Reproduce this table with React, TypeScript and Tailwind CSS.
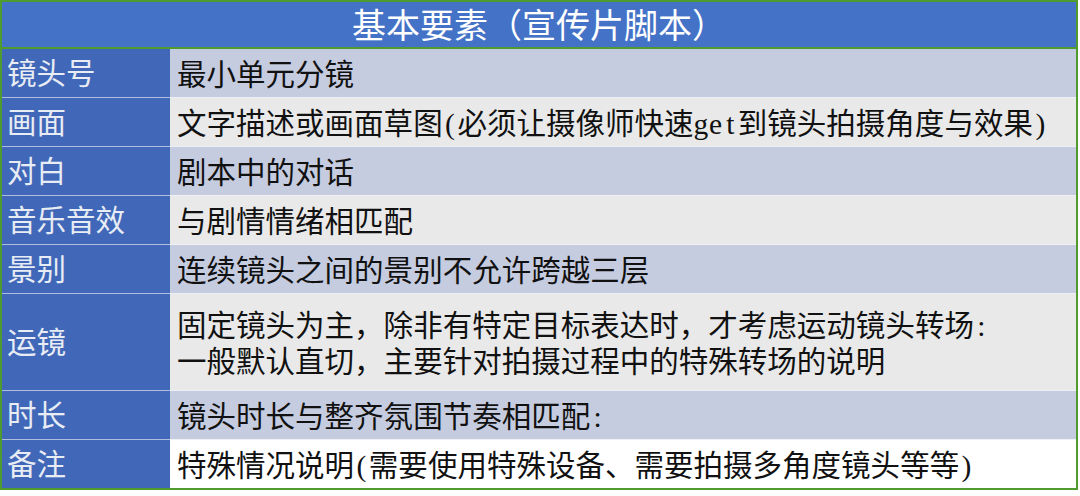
const ROWS = [
  { label: '镜头号', lines: ['最小单元分镜'], bg: 'bg-[#c6cce0]', h: 'h-[49px]' },
  { label: '画面', lines: ['文字描述或画面草图(必须让摄像师快速get到镜头拍摄角度与效果)'], bg: 'bg-[#e9e9e9]', h: 'h-[49px]' },
  { label: '对白', lines: ['剧本中的对话'], bg: 'bg-[#c6cce0]', h: 'h-[49px]' },
  { label: '音乐音效', lines: ['与剧情情绪相匹配'], bg: 'bg-[#e9e9e9]', h: 'h-[49px]' },
  { label: '景别', lines: ['连续镜头之间的景别不允许跨越三层'], bg: 'bg-[#c6cce0]', h: 'h-[49px]' },
  {
    label: '运镜',
    lines: ['固定镜头为主，除非有特定目标表达时，才考虑运动镜头转场:', '一般默认直切，主要针对拍摄过程中的特殊转场的说明'],
    bg: 'bg-[#e9e9e9]',
    h: 'h-[97px]',
  },
  { label: '时长', lines: ['镜头时长与整齐氛围节奏相匹配:'], bg: 'bg-[#c6cce0]', h: 'h-[49px]' },
  { label: '备注', lines: ['特殊情况说明(需要使用特殊设备、需要拍摄多角度镜头等等)'], bg: 'bg-white', h: 'h-[48px]' },
];

// the original uses a half-width cell for every latin char, so give each one 0.5em
function Line({ text }: { text: string }) {
  return (
    <div>
      {Array.from(text).map((ch, i) =>
        ch.charCodeAt(0) < 128 ? (
          <span key={i} className="inline-block w-[0.5em] text-center">
            {ch}
          </span>
        ) : (
          <span key={i}>{ch}</span>
        )
      )}
    </div>
  );
}

export default function App() {
  return (
    <div className="w-[1080px] h-[496px] bg-white font-['Liberation_Serif','Noto_Sans_CJK_SC',serif]">
      <div className="w-[1078px] border-2 border-[#4f9b2f]">
        {/* title bar */}
        <div className="h-[47px] pt-[5px] bg-[#4472c6] border-b-2 border-[#4f9b2f] flex items-center justify-center text-white text-[34px] leading-none">
          基本要素（宣传片脚本）
        </div>

        {ROWS.map((row, i) => {
          const last = i === ROWS.length - 1;
          return (
            <div key={row.label} className={`flex ${row.h}`}>
              <div
                className={`w-[168px] shrink-0 bg-[#4168b8] text-[#e8ecf4] text-[29.5px] pl-[5px] pt-[3px] flex items-center ${
                  last ? '' : 'border-b border-[#aebde0]'
                }`}
              >
                {row.label}
              </div>
              <div
                className={`flex-1 ${row.bg} text-[#111] text-[29.5px] leading-[36px] pl-[7px] pt-[3px] flex flex-col justify-center whitespace-nowrap ${
                  last ? '' : 'border-b border-[#eef0f5]'
                }`}
              >
                {row.lines.map(line => (
                  <Line key={line} text={line} />
                ))}
              </div>
            </div>
          );
        })}
      </div>
    </div>
  );
}
